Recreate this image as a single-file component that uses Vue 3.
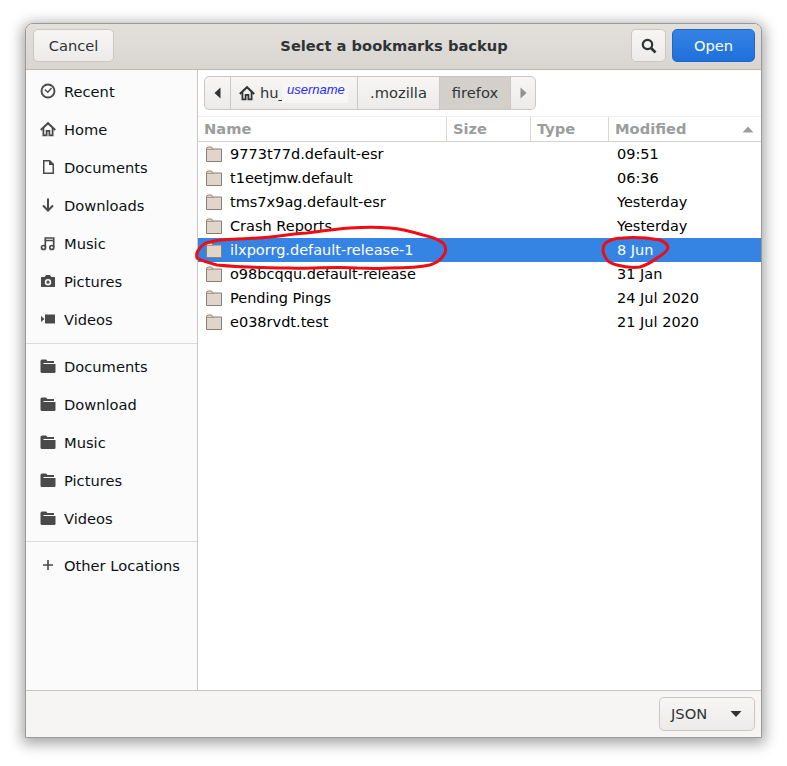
<script setup>
const places = [
  { label: 'Recent', icon: 'recent' },
  { label: 'Home', icon: 'home' },
  { label: 'Documents', icon: 'doc' },
  { label: 'Downloads', icon: 'down' },
  { label: 'Music', icon: 'music' },
  { label: 'Pictures', icon: 'camera' },
  { label: 'Videos', icon: 'video' },
]
const bookmarks = ['Documents', 'Download', 'Music', 'Pictures', 'Videos']
const files = [
  { name: '9773t77d.default-esr', date: '09:51' },
  { name: 't1eetjmw.default', date: '06:36' },
  { name: 'tms7x9ag.default-esr', date: 'Yesterday' },
  { name: 'Crash Reports', date: 'Yesterday' },
  { name: 'ilxporrg.default-release-1', date: '8 Jun', selected: true },
  { name: 'o98bcqqu.default-release', date: '31 Jan' },
  { name: 'Pending Pings', date: '24 Jul 2020' },
  { name: 'e038rvdt.test', date: '21 Jul 2020' },
]
</script>

<template>
  <div class="page">
    <div class="window">
      <header class="header">
        <button class="btn cancel">Cancel</button>
        <div class="title">Select a bookmarks backup</div>
        <button class="btn search" aria-label="Search">
          <svg width="16" height="16" viewBox="0 0 16 16"><circle cx="6.5" cy="6.5" r="4.7" fill="none" stroke="#2e3436" stroke-width="2.2"/><path d="M10 10l4.500 4.500" stroke="#2e3436" stroke-width="2.600" fill="none"/></svg>
        </button>
        <button class="btn open">Open</button>
      </header>

      <div class="main">
        <aside class="sidebar">
          <div v-for="p in places" :key="p.label" class="place">
            <span class="ico">
              <svg width="16" height="16" viewBox="0 0 16 16">
                <template v-if="p.icon === 'recent'">
                  <circle cx="8" cy="8" r="6.500" fill="none" stroke="#4a4a4a" stroke-width="1.900"/>
                  <path d="M4.800 6.500L7.800 9.300 11.500 5" fill="none" stroke="#4a4a4a" stroke-width="1.400"/>
                </template>
                <g v-else-if="p.icon === 'home'" fill="none" stroke="#4a4a4a">
                  <path d="M0.800 9L8 2.200 15.200 9" stroke-width="2"/>
                  <path d="M3.400 7V14.300H6.600V9.800H9.400V14.300H12.600V7" stroke-width="1.800"/>
                </g>
                <path v-else-if="p.icon === 'doc'" d="M3 1H10L14 5V15H3ZM4.500 2.500V13.500H12.500V6H9V2.500Z" fill="#4a4a4a" fill-rule="evenodd"/>
                <path v-else-if="p.icon === 'down'" d="M8 1.500V13M3 8.500L8 13.500 13 8.500" fill="none" stroke="#4a4a4a" stroke-width="2"/>
                <g v-else-if="p.icon === 'music'" fill="none" stroke="#4a4a4a" stroke-width="1.700">
                  <circle cx="3.500" cy="12.500" r="2"/><circle cx="11.800" cy="12.500" r="2"/>
                  <path d="M5.300 12V3H13.700V12M5.300 5.500H13.700"/>
                </g>
                <path v-else-if="p.icon === 'camera'" d="M1 4H4.500L6 2H10L11.500 4H15V14H1ZM8 6A3.200 3.200 0 1 0 8 12.400 3.200 3.200 0 1 0 8 6ZM8 7.600A1.600 1.600 0 1 1 8 10.800 1.600 1.600 0 1 1 8 7.600Z" fill="#4a4a4a" fill-rule="evenodd"/>
                <path v-else d="M5 3.500H15V12.500H5ZM1 5L4.500 8 1 11Z" fill="#4a4a4a"/>
              </svg>
            </span>
            <span class="place-label">{{ p.label }}</span>
          </div>
          <div class="sep first-sep"></div>
          <div v-for="b in bookmarks" :key="b" class="place">
            <span class="ico">
              <svg width="16" height="16" viewBox="0 0 16 16">
                <path d="M0.500 3Q0.500 1.500 2 1.500H6L7.500 3H14V5H3.500V6H15.500V14Q15.500 15 14 15H2Q0.500 15 0.500 13.500Z" fill="#4a4a4a"/>
              </svg>
            </span>
            <span class="place-label">{{ b }}</span>
          </div>
          <div class="sep second-sep"></div>
          <div class="place">
            <span class="ico">
              <svg width="16" height="16" viewBox="0 0 16 16"><path d="M8 3V13M3 8H13" stroke="#4a4a4a" stroke-width="1.600" fill="none"/></svg>
            </span>
            <span class="place-label">Other Locations</span>
          </div>
        </aside>

        <section class="content">
          <div class="pathwrap">
            <div class="pathbar">
              <div class="seg arrow">
                <svg width="8" height="12" viewBox="0 0 8 12"><path d="M6.500 0.500V11.500L0.500 6Z" fill="#2e3436"/></svg>
              </div>
              <div class="seg home">
                <svg width="16" height="16" viewBox="0 0 16 16" fill="none" stroke="#2e3436">
                  <path d="M0.800 9L8 2.200 15.200 9" stroke-width="2"/>
                  <path d="M3.400 7V14.300H6.600V9.800H9.400V14.300H12.600V7" stroke-width="1.800"/>
                </svg>
                <span class="hu">hu_</span>
                <span class="username">username</span>
              </div>
              <div class="seg mozilla">.mozilla</div>
              <div class="seg firefox">firefox</div>
              <div class="seg arrow last">
                <svg width="8" height="12" viewBox="0 0 8 12"><path d="M1.500 0.500V11.500L7.500 6Z" fill="#8f9192"/></svg>
              </div>
            </div>
          </div>

          <div class="columns">
            <div class="col c-name">Name</div>
            <div class="col c-size">Size</div>
            <div class="col c-type">Type</div>
            <div class="col c-mod">
              Modified
              <svg class="sort" width="12" height="7" viewBox="0 0 12 7"><path d="M6 0.500L11.500 6.500H0.500Z" fill="#9b9d9d"/></svg>
            </div>
          </div>

          <div class="rows">
            <div v-for="f in files" :key="f.name" class="row" :class="{ selected: f.selected }">
              <svg class="folder" width="16" height="16" viewBox="0 0 16 16">
                <path d="M0.500 3Q0.500 1 2.500 1H5.500L7 3H15.500V15.500H0.500Z" fill="#dfd5ca" stroke="#8d7e6f" stroke-width="1"/>
                <path d="M1 3.500H7.500" stroke="#a89889" stroke-width="1" fill="none"/>
              </svg>
              <span class="fname">{{ f.name }}</span>
              <span class="fdate">{{ f.date }}</span>
            </div>
          </div>
        </section>
      </div>

      <footer class="footer">
        <button class="btn json">
          <span>JSON</span>
          <svg width="12" height="6" viewBox="0 0 12 6"><path d="M0.500 0H11.500L6 6Z" fill="#2e3436"/></svg>
        </button>
      </footer>
    </div>

    <svg class="ink" width="787" height="766" viewBox="0 0 787 766">
      <path d="M206 243C222 238 240 240 257 238C275 237 290 234 307 233C322 231 335 229 350 228C365 227 378 227 390 228C402 229 413 232 423 235C432 237 439 240 443 243C446 246 446 250 445 253C442 259 437 263 430 265C417 268 404 268 390 268C379 269 368 268 357 268C335 266 313 269 290 268C277 268 263 268 250 267C239 267 228 266 217 265C209 263 202 261 197 258C196 254 197 251 200 248C202 245 204 244 206 243Z" fill="none" stroke="#ee0d12" stroke-width="3"/>
      <path d="M603 250C603 246 604 244 607 242C612 239 617 238 623 238C635 237 648 238 660 240C665 242 668 245 668 248C667 252 662 255 657 258C652 262 646 265 640 267C632 268 624 267 617 265C613 264 609 262 607 260C605 257 603 254 603 250Z" fill="none" stroke="#ee0d12" stroke-width="3"/>
    </svg>
  </div>
</template>

<style>
html, body { margin: 0; background: #fff; }
</style>

<style scoped>
.page {
  position: relative;
  width: 787px;
  height: 766px;
  padding: 23px 0 0 25px;
  box-sizing: border-box;
  overflow: hidden;
  background: #fff;
  font-family: "DejaVu Sans", sans-serif;
  font-size: 14.67px;
  color: #000;
}
.window {
  width: 737px;
  height: 715px;
  box-sizing: border-box;
  border: 1px solid #9a9a98;
  border-radius: 8px 8px 0 0;
  display: flex;
  flex-direction: column;
  background: #f6f5f4;
  box-shadow: 0 3px 14px 3px rgba(0, 0, 0, 0.35);
  overflow: hidden;
}
.header {
  height: 46px;
  flex: none;
  box-sizing: border-box;
  border-bottom: 1px solid #bfb8b1;
  background: linear-gradient(#e3e0dc, #d9d5d0);
  display: flex;
  align-items: center;
  padding: 0 6px 2px 7px;
  gap: 6px;
}
.btn {
  font: inherit;
  height: 33px;
  padding: 0;
  box-sizing: border-box;
  border: 1px solid #cdc7c2;
  border-radius: 5px;
  background: linear-gradient(#f7f6f5, #edebe9);
  color: #2e3436;
  display: flex;
  align-items: center;
  justify-content: center;
}
.cancel { width: 81px; }
.title {
  flex: 1;
  text-align: center;
  font-weight: 700;
  color: #2e3436;
  padding-left: 43px;
}
.search { width: 35px; }
.open {
  width: 83px;
  border-color: #1b6acb;
  background: linear-gradient(#3584e4, #1f6fdc);
  color: #fff;
}
.main { flex: 1; display: flex; min-height: 0; }
.sidebar {
  width: 172px;
  flex: none;
  box-sizing: border-box;
  border-right: 1px solid #cbc6c1;
  background: #fbfbfb;
  padding-top: 2px;
}
.place {
  height: 38px;
  display: flex;
  align-items: center;
  padding-left: 14px;
  gap: 8px;
}
.ico { display: flex; width: 16px; height: 16px; }
.place-label { color: #0d1114; }
.sep { height: 1px; background: #dcdbd9; }
.first-sep { margin: 5px 0 3px; }
.second-sep { margin: 4px 0 4px; }
.content { flex: 1; background: #fff; display: flex; flex-direction: column; min-width: 0; }
.pathwrap { padding: 6px; height: 46px; box-sizing: border-box; flex: none; }
.pathbar {
  display: inline-flex;
  height: 34px;
  box-sizing: border-box;
  border: 1px solid #cdc7c2;
  border-radius: 5px;
  overflow: hidden;
  background: linear-gradient(#f7f6f5, #edebe9);
  color: #2e3436;
}
.seg {
  display: flex;
  align-items: center;
  box-sizing: border-box;
  border-right: 1px solid #cdc7c2;
  position: relative;
  padding-bottom: 1px;
}
.seg.arrow { width: 26px; justify-content: center; }
.seg.last { width: 24px; border-right: 0; }
.seg.home { width: 127px; padding-left: 8px; gap: 5px; }
.username {
  position: absolute;
  left: 51px;
  top: 6px;
  width: 66px;
  height: 20px;
  background: #f6f6f5;
  color: #2929ff;
  font-family: "Liberation Sans", sans-serif;
  font-style: italic;
  font-size: 13px;
  line-height: 14px;
  padding-left: 5px;
  box-sizing: border-box;
}
.seg.mozilla { width: 82px; justify-content: center; }
.seg.firefox { width: 71px; justify-content: center; background: #d3cfca; }
.columns {
  height: 26px;
  flex: none;
  box-sizing: border-box;
  display: flex;
  border-top: 1px solid #f0efee;
  border-bottom: 1px solid #d5d2ce;
  color: #9b9d9d;
  font-weight: 700;
}
.col {
  box-sizing: border-box;
  padding-left: 6px;
  line-height: 24px;
  border-right: 1px solid #dad7d3;
  position: relative;
}
.c-name { width: 249px; }
.c-size { width: 84px; }
.c-type { width: 78px; }
.c-mod { flex: 1; border-right: 0; }
.sort { position: absolute; right: 7px; top: 9px; }
.rows { flex: 1; font-size: 14.5px; }
.row {
  height: 24px;
  display: flex;
  align-items: center;
  position: relative;
  padding-left: 8px;
}
.row.selected { background: #3584e4; color: #fff; }
.folder { flex: none; }
.fname { margin-left: 8px; width: 387px; white-space: nowrap; }
.fdate { white-space: nowrap; }
.footer {
  height: 47px;
  flex: none;
  box-sizing: border-box;
  border-top: 1px solid #c9c3bd;
  background: #f6f5f4;
  display: flex;
  align-items: center;
  justify-content: flex-end;
  padding-right: 6px;
}
.json {
  width: 96px;
  height: 34px;
  justify-content: space-between;
  padding: 0 12px 1px 11px;
}
.ink { position: absolute; left: 0; top: 0; pointer-events: none; }
</style>
